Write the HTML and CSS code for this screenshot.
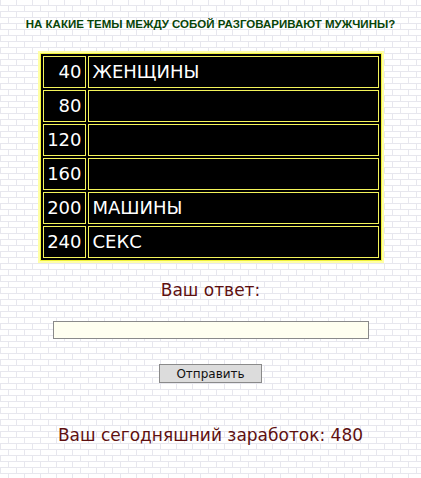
FILE: index.html
```html
<!DOCTYPE html>
<html lang="ru">
<head>
  <meta charset="UTF-8" />
  <title>Своя игра</title>
  <link rel="stylesheet" href="styles.css">
</head>
<body>
  <div class="page">
    <h1 class="question">НА КАКИЕ ТЕМЫ МЕЖДУ СОБОЙ РАЗГОВАРИВАЮТ МУЖЧИНЫ?</h1>

    <div class="board">
      <div class="cell points">40</div>
      <div class="cell answer">ЖЕНЩИНЫ</div>
      <div class="cell points">80</div>
      <div class="cell answer"></div>
      <div class="cell points">120</div>
      <div class="cell answer"></div>
      <div class="cell points">160</div>
      <div class="cell answer"></div>
      <div class="cell points">200</div>
      <div class="cell answer">МАШИНЫ</div>
      <div class="cell points">240</div>
      <div class="cell answer">СЕКС</div>
    </div>

    <form class="answer-form" onsubmit="return false;">
      <label class="answer-label" for="answerInput">Ваш ответ:</label>
      <input class="answer-input" id="answerInput" type="text" />
      <button class="submit-btn" type="submit">Отправить</button>
    </form>

    <p class="earnings">Ваш сегодняшний заработок: 480</p>
  </div>
</body>
</html>
```

FILE: styles.css
```css
/* Brick wall background */
body {
  margin: 0;
  font-family: "DejaVu Sans", Verdana, sans-serif;
  background:
    linear-gradient(#e7e7ee 1px, transparent 1px) 0 5px / 16px 6px,
    conic-gradient(at 1px 6px, transparent 75%, #e7e7ee 0) 0 0 / 16px 12px,
    conic-gradient(at 1px 6px, transparent 75%, #e7e7ee 0) 8px 6px / 16px 12px,
    #fff;
}

.page {
  display: flex;
  flex-direction: column;
  align-items: center;
  padding-top: 17px;
}

.question {
  margin: 0;
  font-family: "Liberation Sans", Arial, sans-serif;
  font-size: 11.5px;
  line-height: 14px;
  font-weight: bold;
  color: #084408;
  text-align: center;
}

/* Game board */
.board {
  margin-top: 20px;
  width: 336px;
  display: grid;
  grid-template-columns: 43px 1fr;
  grid-auto-rows: 32px;
  gap: 2px;
  padding: 3px;
  background: #000;
  border: 2px solid #ffffa6;
  box-shadow: inset 0 0 0 1px #f2f23a;
  box-sizing: content-box;
}

.cell {
  border: 1px solid #f4f45a;
  color: #fff;
  font-size: 18px;
  line-height: 30px;
  white-space: nowrap;
}

.points {
  text-align: right;
  padding-right: 3px;
}

.answer {
  padding-left: 4px;
}

/* Answer form */
.answer-form {
  display: flex;
  flex-direction: column;
  align-items: center;
}

.answer-label {
  margin-top: 17px;
  font-size: 17px;
  line-height: 20px;
  color: #5e1010;
}

.answer-input {
  margin-top: 21px;
  width: 316px;
  height: 18px;
  box-sizing: border-box;
  border: 1px solid #8a8a8a;
  background: #fffff0;
  padding: 0 3px;
}

.submit-btn {
  margin-top: 25px;
  width: 103px;
  height: 19px;
  box-sizing: border-box;
  border: 1px solid #8a8a8a;
  background: #dcdcdc;
  font-family: "DejaVu Sans", Verdana, sans-serif;
  font-size: 12px;
  color: #111;
  padding: 0;
}

.earnings {
  margin: 42px 0 0;
  font-size: 17px;
  line-height: 20px;
  color: #5e1010;
}
```
